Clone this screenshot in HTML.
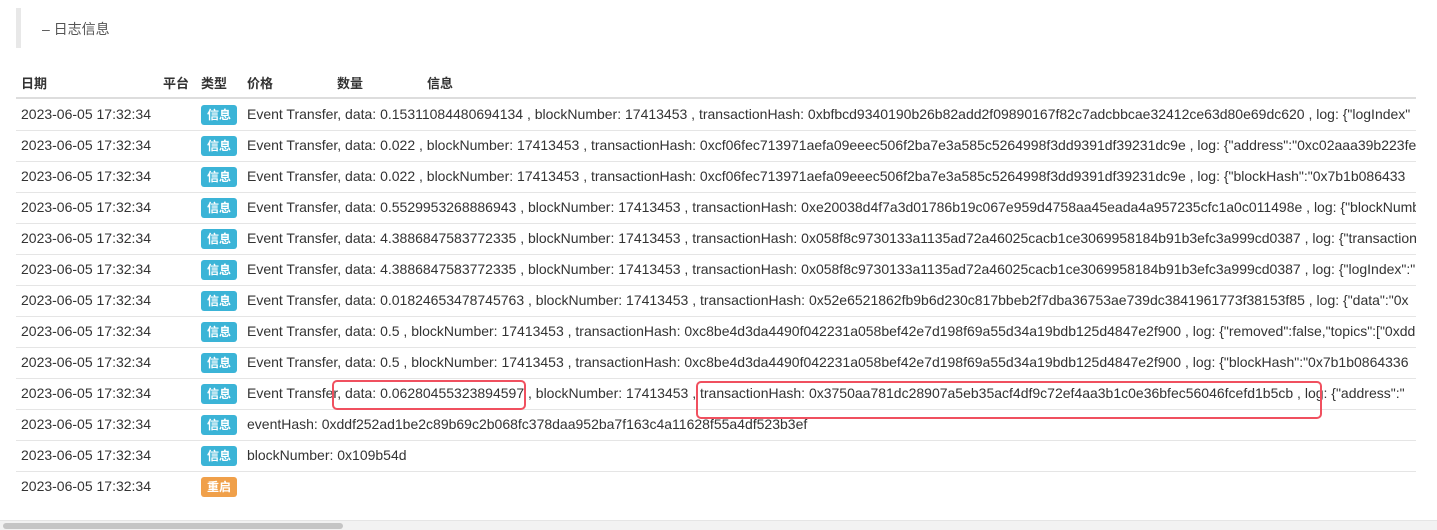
<!DOCTYPE html>
<html><head><meta charset="utf-8"><style>
body{margin:0;width:1437px;height:529px;background:#fff;font-family:"Liberation Sans","Noto Sans CJK SC",sans-serif;color:#333;position:relative;overflow:hidden}
.sec{position:absolute;left:16px;top:8px;width:5px;height:40px;background:#e8e8e8}
.title{position:absolute;left:42px;top:19px;font-size:14px;color:#555}
.hd{position:absolute;top:73px;font-size:13px;font-weight:bold;color:#333}
.hl{position:absolute;left:16px;top:97px;width:1400px;height:2px;background:#ddd}
.row{position:absolute;left:16px;width:1400px;height:31px;border-bottom:1px solid #e5e5e5;font-size:14px;white-space:nowrap;overflow:hidden}
.row .d{position:absolute;left:5px;top:7px}
.row .b{position:absolute;left:185px;top:6px;width:36px;height:20px;border-radius:3px;background:#3bb4d7;color:#fff;font-size:12px;font-weight:bold;text-align:center;line-height:20px}
.row .b.o{background:#f0a04a}
.row .m{position:absolute;left:231px;top:7px}
.box{position:absolute;border:2px solid #f0505f;border-radius:5px}
.sb{position:absolute;left:0;top:520px;width:1437px;height:9px;background:#f2f2f2;border-top:1px solid #e5e5e5}
.th{position:absolute;left:3px;top:523px;width:340px;height:6px;background:#c5c5c5;border-radius:3px}
</style></head><body>
<div class="sec"></div>
<div class="title">– 日志信息</div>
<div class="hd" style="left:21px">日期</div>
<div class="hd" style="left:163px">平台</div>
<div class="hd" style="left:201px">类型</div>
<div class="hd" style="left:247px">价格</div>
<div class="hd" style="left:337px">数量</div>
<div class="hd" style="left:427px">信息</div>
<div class="hl"></div>
<div class="row" style="top:99px"><span class="d">2023-06-05 17:32:34</span><span class="b">信息</span><span class="m">Event Transfer, data: 0.15311084480694134 , blockNumber: 17413453 , transactionHash: 0xbfbcd9340190b26b82add2f09890167f82c7adcbbcae32412ce63d80e69dc620 , log: {"logIndex"</span></div>
<div class="row" style="top:130px"><span class="d">2023-06-05 17:32:34</span><span class="b">信息</span><span class="m">Event Transfer, data: 0.022 , blockNumber: 17413453 , transactionHash: 0xcf06fec713971aefa09eeec506f2ba7e3a585c5264998f3dd9391df39231dc9e , log: {"address":"0xc02aaa39b223fe</span></div>
<div class="row" style="top:161px"><span class="d">2023-06-05 17:32:34</span><span class="b">信息</span><span class="m">Event Transfer, data: 0.022 , blockNumber: 17413453 , transactionHash: 0xcf06fec713971aefa09eeec506f2ba7e3a585c5264998f3dd9391df39231dc9e , log: {"blockHash":"0x7b1b086433</span></div>
<div class="row" style="top:192px"><span class="d">2023-06-05 17:32:34</span><span class="b">信息</span><span class="m">Event Transfer, data: 0.5529953268886943 , blockNumber: 17413453 , transactionHash: 0xe20038d4f7a3d01786b19c067e959d4758aa45eada4a957235cfc1a0c011498e , log: {"blockNumber"</span></div>
<div class="row" style="top:223px"><span class="d">2023-06-05 17:32:34</span><span class="b">信息</span><span class="m">Event Transfer, data: 4.3886847583772335 , blockNumber: 17413453 , transactionHash: 0x058f8c9730133a1135ad72a46025cacb1ce3069958184b91b3efc3a999cd0387 , log: {"transactionHash"</span></div>
<div class="row" style="top:254px"><span class="d">2023-06-05 17:32:34</span><span class="b">信息</span><span class="m">Event Transfer, data: 4.3886847583772335 , blockNumber: 17413453 , transactionHash: 0x058f8c9730133a1135ad72a46025cacb1ce3069958184b91b3efc3a999cd0387 , log: {"logIndex":"</span></div>
<div class="row" style="top:285px"><span class="d">2023-06-05 17:32:34</span><span class="b">信息</span><span class="m">Event Transfer, data: 0.01824653478745763 , blockNumber: 17413453 , transactionHash: 0x52e6521862fb9b6d230c817bbeb2f7dba36753ae739dc3841961773f38153f85 , log: {"data":"0x</span></div>
<div class="row" style="top:316px"><span class="d">2023-06-05 17:32:34</span><span class="b">信息</span><span class="m">Event Transfer, data: 0.5 , blockNumber: 17413453 , transactionHash: 0xc8be4d3da4490f042231a058bef42e7d198f69a55d34a19bdb125d4847e2f900 , log: {"removed":false,"topics":["0xdd</span></div>
<div class="row" style="top:347px"><span class="d">2023-06-05 17:32:34</span><span class="b">信息</span><span class="m">Event Transfer, data: 0.5 , blockNumber: 17413453 , transactionHash: 0xc8be4d3da4490f042231a058bef42e7d198f69a55d34a19bdb125d4847e2f900 , log: {"blockHash":"0x7b1b0864336</span></div>
<div class="row" style="top:378px"><span class="d">2023-06-05 17:32:34</span><span class="b">信息</span><span class="m">Event Transfer, data: 0.06280455323894597 , blockNumber: 17413453 , transactionHash: 0x3750aa781dc28907a5eb35acf4df9c72ef4aa3b1c0e36bfec56046fcefd1b5cb , log: {"address":"</span></div>
<div class="row" style="top:409px"><span class="d">2023-06-05 17:32:34</span><span class="b">信息</span><span class="m">eventHash: 0xddf252ad1be2c89b69c2b068fc378daa952ba7f163c4a11628f55a4df523b3ef</span></div>
<div class="row" style="top:440px"><span class="d">2023-06-05 17:32:34</span><span class="b">信息</span><span class="m">blockNumber: 0x109b54d</span></div>
<div class="row" style="top:471px;border-bottom:none"><span class="d">2023-06-05 17:32:34</span><span class="b o">重启</span></div>
<div class="box" style="left:332px;top:380px;width:190px;height:26px"></div>
<div class="box" style="left:696px;top:381px;width:622px;height:34px"></div>
<div class="sb"></div><div class="th"></div>
</body></html>
